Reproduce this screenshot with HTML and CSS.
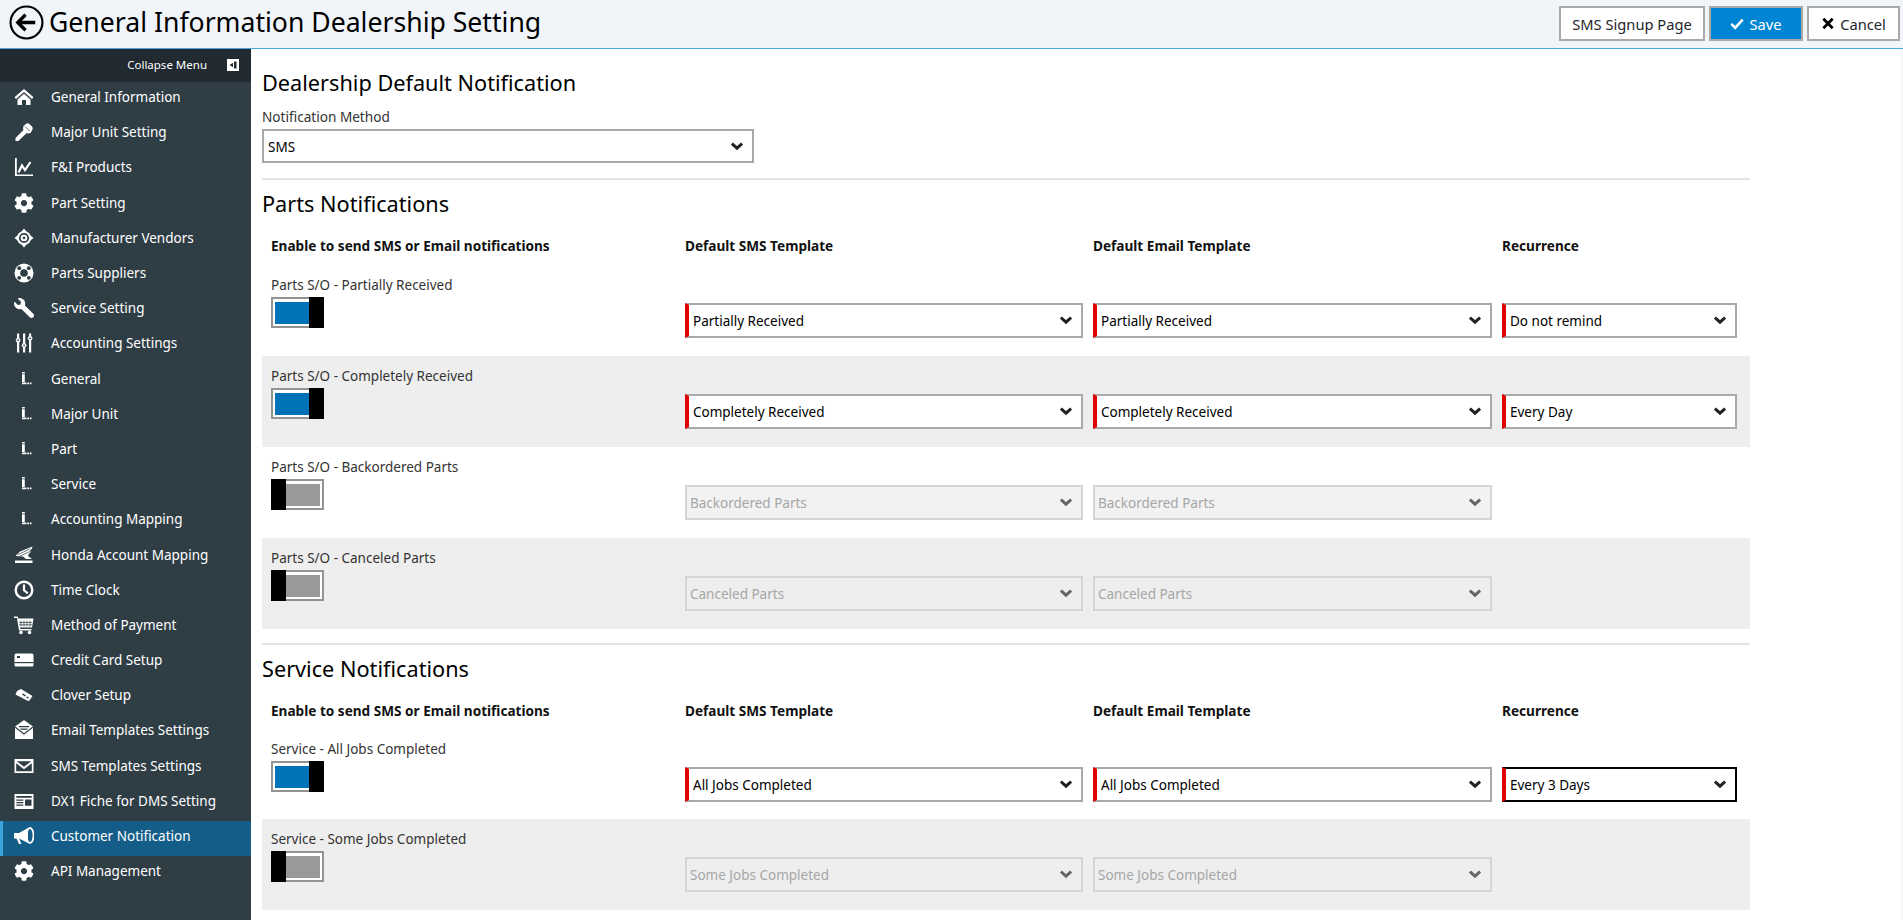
FILE: index.html
```html
<!DOCTYPE html>
<html lang="en">
<head>
<meta charset="utf-8">
<title>General Information Dealership Setting</title>
<link rel="stylesheet" href="styles.css">
</head>
<body>
<svg class="defs" width="0" height="0" aria-hidden="true">
  <symbol id="i-gear" viewBox="0 0 512 512"><path d="M487.4 315.7l-42.6-24.6c4.3-23.2 4.3-47 0-70.2l42.6-24.6c4.9-2.8 7.1-8.6 5.5-14-11.1-35.6-30-67.8-54.7-94.6-3.8-4.1-10-5.1-14.8-2.3L380.8 110c-17.9-15.4-38.5-27.3-60.8-35.1V25.8c0-5.6-3.9-10.5-9.4-11.7-36.7-8.2-74.3-7.8-109.2 0-5.5 1.2-9.4 6.1-9.4 11.7V75c-22.2 7.9-42.8 19.8-60.8 35.1L88.7 85.5c-4.9-2.8-11-1.9-14.8 2.3-24.7 26.7-43.6 58.9-54.7 94.6-1.7 5.4.6 11.2 5.5 14L67.3 221c-4.3 23.2-4.3 47 0 70.2l-42.6 24.6c-4.9 2.8-7.1 8.6-5.5 14 11.1 35.6 30 67.8 54.7 94.6 3.8 4.1 10 5.1 14.8 2.3l42.6-24.6c17.9 15.4 38.5 27.3 60.8 35.1v49.2c0 5.6 3.9 10.5 9.4 11.7 36.7 8.2 74.3 7.8 109.2 0 5.5-1.2 9.4-6.1 9.4-11.7v-49.2c22.2-7.9 42.8-19.8 60.8-35.1l42.6 24.6c4.9 2.8 11 1.9 14.8-2.3 24.7-26.7 43.6-58.9 54.7-94.6 1.5-5.5-.7-11.3-5.6-14.1zM256 336c-44.1 0-80-35.9-80-80s35.9-80 80-80 80 35.9 80 80-35.9 80-80 80z"/></symbol>
  <symbol id="i-sub" viewBox="0 0 20 20"><path d="M8 3h2.800v1.500H8zM8 5.200h2.800v7.800H8zM8 13.500h4.500v1.800H8zM13.300 13.500h1.700v1.800h-1.700zM15.800 13.500h1.700v1.800h-1.700z"/></symbol>
</svg>

<header class="topbar">
  <div class="topbar-left">
    <svg class="back" viewBox="0 0 36 36" aria-hidden="true"><circle cx="18" cy="18" r="16.4" fill="none" stroke="#000" stroke-width="2.2"/><path d="M9 18h18M17 10l-8 8 8 8" fill="none" stroke="#000" stroke-width="3.4"/></svg>
    <h1 class="title">General Information Dealership Setting</h1>
  </div>
  <div class="actions">
    <button class="btn btn-sms" type="button">SMS Signup Page</button>
    <button class="btn btn-save" type="button"><svg class="btn-icon" viewBox="0 0 16 14" aria-hidden="true"><path d="M1.500 7.500l4.500 4.500 8.500-9.500" fill="none" stroke="#fff" stroke-width="3"/></svg>Save</button>
    <button class="btn btn-cancel" type="button"><svg class="btn-icon" viewBox="0 0 14 14" aria-hidden="true"><path d="M2 2l10 10M12 2L2 12" fill="none" stroke="#000" stroke-width="3"/></svg>Cancel</button>
  </div>
</header>

<div class="shell">
  <nav class="sidebar">
    <div class="collapse">
      <span>Collapse Menu</span>
      <svg class="collapse-icon" viewBox="0 0 12 12" aria-hidden="true"><path fill="#fff" d="M0 0h12v12H0z"/><path fill="#212a31" d="M7 2.500h2.500v7H7zM6 3.800v4.400L2.500 6z"/></svg>
    </div>
    <ul class="menu">
      <li class="item"><svg class="ico" viewBox="0 0 20 20"><path d="M10 2L.5 10.300 2 12l8-7 8 7 1.500-1.700zM3.500 12.500L10 6.800l6.500 5.700V18H12v-5H8v5H3.500z"/></svg><span>General Information</span></li>
      <li class="item"><svg class="ico" viewBox="0 0 20 20"><path d="M12.500 1.500a3 3 0 0 1 3 .5l2.500 2.500a3 3 0 0 1 .5 3l-2 3.500-2.500.5-1.300-.6L4.500 19h-3v-3l8-8-.5-1.500.5-2.500z"/><path d="M11 4.500l4.500 4.500" stroke="#2f3d45" stroke-width=".8" fill="none"/></svg><span>Major Unit Setting</span></li>
      <li class="item"><svg class="ico" viewBox="0 0 20 20"><path d="M1 1h1.800v16.500H19V19H1z"/><path d="M4.500 15.500l3.500-7 3 4.500 5.500-8" fill="none" stroke="#fff" stroke-width="2.200"/></svg><span>F&amp;I Products</span></li>
      <li class="item"><svg class="ico" viewBox="0 0 20 20"><use href="#i-gear"/></svg><span>Part Setting</span></li>
      <li class="item"><svg class="ico" viewBox="0 0 20 20"><path d="M10 .5l2.200 2.700a7 7 0 0 1 4.600 4.600L19.500 10l-2.700 2.200a7 7 0 0 1-4.600 4.600L10 19.500l-2.200-2.700a7 7 0 0 1-4.600-4.600L.5 10l2.700-2.200a7 7 0 0 1 4.600-4.600z"/><circle cx="10" cy="10" r="4.200" fill="none" stroke="#2f3d45" stroke-width="1.800"/><circle cx="10" cy="10" r="1.300" fill="#2f3d45"/></svg><span>Manufacturer Vendors</span></li>
      <li class="item"><svg class="ico" viewBox="0 0 20 20"><circle cx="10" cy="10" r="9.500"/><circle cx="10" cy="10" r="3.800" fill="#2f3d45"/><circle cx="5.200" cy="5.200" r="1.900" fill="#2f3d45"/><circle cx="14.800" cy="5.200" r="1.900" fill="#2f3d45"/><circle cx="5.200" cy="14.800" r="1.900" fill="#2f3d45"/><circle cx="14.800" cy="14.800" r="1.900" fill="#2f3d45"/></svg><span>Parts Suppliers</span></li>
      <li class="item"><svg class="ico" viewBox="0 0 512 512"><path transform="matrix(-1 0 0 1 512 0)" d="M507.730 109.100c-2.240-9.030-13.540-12.090-20.120-5.510l-74.360 74.360-67.880-11.310-11.310-67.880 74.360-74.360c6.620-6.620 3.430-17.900-5.660-20.160-47.380-11.740-99.550.91-136.580 37.930-39.640 39.640-50.550 97.100-34.050 147.200L18.740 402.760c-24.990 24.990-24.990 65.510 0 90.500 24.990 24.990 65.510 24.990 90.500 0l213.210-213.210c50.120 16.710 107.470 5.680 147.370-34.220 37.070-37.070 49.700-89.320 37.910-136.730z"/></svg><span>Service Setting</span></li>
      <li class="item"><svg class="ico" viewBox="0 0 20 20"><path d="M3 .5h2.200v5H3zM3 9h2.200v10.500H3zM9 .5h2.200v10H9zM9 14h2.200v5.500H9zM15 .5h2.200v3H15zM15 7h2.200v12.500H15z"/><circle cx="4.100" cy="7.200" r="2.300"/><circle cx="10.100" cy="12.300" r="2.300"/><circle cx="16.100" cy="5.300" r="2.300"/><circle cx="4.100" cy="7.200" r=".9" fill="#2f3d45"/><circle cx="10.100" cy="12.300" r=".9" fill="#2f3d45"/><circle cx="16.100" cy="5.300" r=".9" fill="#2f3d45"/></svg><span>Accounting Settings</span></li>
      <li class="item"><svg class="ico" viewBox="0 0 20 20"><use href="#i-sub"/></svg><span>General</span></li>
      <li class="item"><svg class="ico" viewBox="0 0 20 20"><use href="#i-sub"/></svg><span>Major Unit</span></li>
      <li class="item"><svg class="ico" viewBox="0 0 20 20"><use href="#i-sub"/></svg><span>Part</span></li>
      <li class="item"><svg class="ico" viewBox="0 0 20 20"><use href="#i-sub"/></svg><span>Service</span></li>
      <li class="item"><svg class="ico" viewBox="0 0 20 20"><use href="#i-sub"/></svg><span>Accounting Mapping</span></li>
      <li class="item"><svg class="ico" viewBox="0 0 20 20"><path d="M18.500 1.500L6 6.500 1.500 11l7.500.5 3 2.500h6L14 11l1-2.500 2.500-2-2.500.5 3-3.500z"/><path d="M4 9.500L16 4M6 11l9-4" stroke="#2f3d45" stroke-width=".7" fill="none"/><path d="M1 15.500h17.500v2.500H1z"/></svg><span>Honda Account Mapping</span></li>
      <li class="item"><svg class="ico" viewBox="0 0 20 20"><circle cx="10" cy="10" r="8.300" fill="none" stroke="#fff" stroke-width="2.400"/><path d="M10 4.500v5.800l3.800 3" fill="none" stroke="#fff" stroke-width="2.200"/></svg><span>Time Clock</span></li>
      <li class="item"><svg class="ico" viewBox="0 0 20 20"><path d="M0 1.500h3.500l1 2h15l-1.500 9H6l.4 1.500h11.100v1.500H5L3 3H0z"/><circle cx="7" cy="17.500" r="1.800"/><circle cx="15.500" cy="17.500" r="1.800"/><path d="M7 5.500v6M10 5.500v6M13 5.500v6M16 5.500v6M5 7.500h13M5 9.800h13" stroke="#2f3d45" stroke-width=".7"/></svg><span>Method of Payment</span></li>
      <li class="item"><svg class="ico" viewBox="0 0 20 20"><path d="M2 3.500h16A1.500 1.500 0 0 1 19.500 5v10a1.500 1.500 0 0 1-1.500 1.500H2A1.500 1.500 0 0 1 .5 15V5A1.500 1.500 0 0 1 2 3.500z"/><path d="M.5 12h19v1.200H.5z" fill="#2f3d45"/><path d="M3 6h3v2H3z" fill="#2f3d45"/></svg><span>Credit Card Setup</span></li>
      <li class="item"><svg class="ico" viewBox="0 0 20 20"><path d="M7 4l11.500 7-3 4.500-1.500.5L1.500 9.500 3 6z"/><path d="M9 8.500l3 2-1 1-3-2zM13 11.500l2 1-1 1-2-1z" fill="#2f3d45"/></svg><span>Clover Setup</span></li>
      <li class="item"><svg class="ico" viewBox="0 0 20 20"><path d="M10 0l9 6.500V19H1V6.500z"/><path d="M1 7l9 7 9-7" fill="none" stroke="#2f3d45" stroke-width="1.200"/><path d="M5 6h10v1.300H5zM6.500 8.500h7v1.200h-7z" fill="#2f3d45"/></svg><span>Email Templates Settings</span></li>
      <li class="item"><svg class="ico" viewBox="0 0 20 20"><path d="M.5 3h19v14H.5zM2.800 5.300L10 10.800l7.200-5.500zM2.200 7.300v7.900h15.600V7.300L10 13.200z" fill-rule="evenodd"/></svg><span>SMS Templates Settings</span></li>
      <li class="item"><svg class="ico" viewBox="0 0 20 20"><path d="M.5 3h19v15H.5z"/><path d="M2.300 5h15.400v1.800H2.300zM2.300 8.500h7v1.300h-7zM2.300 11h7v1.300h-7zM2.300 13.500h7v1.300h-7zM11 8.500h6.500v6.300H11z" fill="#2f3d45"/></svg><span>DX1 Fiche for DMS Setting</span></li>
      <li class="item item-active"><svg class="ico" viewBox="0 0 20 20"><path d="M0 7h5l9-5v15L5 12.500 7.500 18H5L2.500 12.500H0z"/><ellipse cx="16" cy="9.500" rx="3.500" ry="7.500" fill="none" stroke="#fff" stroke-width="1.800"/></svg><span>Customer Notification</span></li>
      <li class="item"><svg class="ico" viewBox="0 0 20 20"><use href="#i-gear"/></svg><span>API Management</span></li>
    </ul>
  </nav>

  <main class="content">
    <h2 class="section-title first">Dealership Default Notification</h2>
    <label class="field-label" for="method">Notification Method</label>
    <select class="sel sel-method" id="method"><option>SMS</option></select>
    <hr class="rule">

    <h2 class="section-title">Parts Notifications</h2>
    <div class="grid head">
      <div>Enable to send SMS or Email notifications</div><div>Default SMS Template</div><div>Default Email Template</div><div>Recurrence</div>
    </div>
    <div class="grid row">
      <div class="name"><div class="name-text">Parts S/O - Partially Received</div><div class="toggle on"><span class="fill"></span><span class="thumb"></span></div></div>
      <select class="sel req"><option>Partially Received</option></select>
      <select class="sel req"><option>Partially Received</option></select>
      <select class="sel req"><option>Do not remind</option></select>
    </div>
    <div class="grid row alt">
      <div class="name"><div class="name-text">Parts S/O - Completely Received</div><div class="toggle on"><span class="fill"></span><span class="thumb"></span></div></div>
      <select class="sel req"><option>Completely Received</option></select>
      <select class="sel req"><option>Completely Received</option></select>
      <select class="sel req"><option>Every Day</option></select>
    </div>
    <div class="grid row">
      <div class="name"><div class="name-text">Parts S/O - Backordered Parts</div><div class="toggle off"><span class="thumb"></span><span class="fill"></span></div></div>
      <select class="sel" disabled><option>Backordered Parts</option></select>
      <select class="sel" disabled><option>Backordered Parts</option></select>
    </div>
    <div class="grid row alt">
      <div class="name"><div class="name-text">Parts S/O - Canceled Parts</div><div class="toggle off"><span class="thumb"></span><span class="fill"></span></div></div>
      <select class="sel" disabled><option>Canceled Parts</option></select>
      <select class="sel" disabled><option>Canceled Parts</option></select>
    </div>
    <hr class="rule rule-tight">

    <h2 class="section-title">Service Notifications</h2>
    <div class="grid head head-tight">
      <div>Enable to send SMS or Email notifications</div><div>Default SMS Template</div><div>Default Email Template</div><div>Recurrence</div>
    </div>
    <div class="grid row">
      <div class="name"><div class="name-text">Service - All Jobs Completed</div><div class="toggle on"><span class="fill"></span><span class="thumb"></span></div></div>
      <select class="sel req"><option>All Jobs Completed</option></select>
      <select class="sel req"><option>All Jobs Completed</option></select>
      <select class="sel req focus"><option>Every 3 Days</option></select>
    </div>
    <div class="grid row alt">
      <div class="name"><div class="name-text">Service - Some Jobs Completed</div><div class="toggle off"><span class="thumb"></span><span class="fill"></span></div></div>
      <select class="sel" disabled><option>Some Jobs Completed</option></select>
      <select class="sel" disabled><option>Some Jobs Completed</option></select>
    </div>
  </main>
</div>
</body>
</html>
```

FILE: styles.css
```css
* { box-sizing: border-box; }
html { overflow: hidden; height: 920px; }
body {
  margin: 0;
  display: flex;
  flex-direction: column;
  height: 920px;
  overflow: hidden;
  background: #fff;
  color: #1f262c;
  font-family: "Noto Sans", "Open Sans", sans-serif;
  font-size: 13.5px;
}
.defs { position: absolute; top: 0; left: 0; }

.topbar {
  flex: none;
  height: 49px;
  display: flex;
  align-items: flex-start;
  justify-content: space-between;
  background: #f1f5f9;
  border-bottom: 1px solid #4aa5e0;
}
.topbar-left { display: flex; align-items: center; height: 44px; padding-left: 9px; }
.back { width: 35px; height: 35px; margin-right: 5px; flex: none; }
.title { margin: 0; font-size: 26.6px; font-weight: 400; color: #000; white-space: nowrap; }
.actions { display: flex; gap: 4px; padding: 6px 3px 0 0; }
.btn {
  height: 35px;
  border: 2px solid #a9a9a9;
  background: #fff;
  color: #1f262c;
  font: inherit;
  font-size: 14.7px;
  display: flex;
  align-items: center;
  justify-content: center;
  padding: 0;
}
.btn-sms { width: 146px; }
.btn-save { width: 94px; background: #0085d4; color: #fff; }
.btn-cancel { width: 93px; }
.btn-icon { width: 14px; height: 13px; margin-right: 5px; }

.shell { flex: 1; display: flex; min-height: 0; overflow: hidden; }
.sidebar { flex: none; width: 251px; background: #2f3d45; color: #fff; }
.collapse {
  height: 33px;
  background: #212a31;
  display: flex;
  align-items: center;
  justify-content: flex-end;
  gap: 20px;
  padding: 0 12px 2px 0;
  font-size: 11.5px;
}
.collapse-icon { width: 12px; height: 12px; }
.menu { list-style: none; margin: 0; padding: 0; }
.item {
  height: 35.2px;
  display: flex;
  align-items: center;
  padding: 0 0 5px 14px;
  font-size: 13.5px;
  white-space: nowrap;
}
.ico { width: 20px; height: 20px; flex: none; margin-right: 17px; fill: #fff; }
.item-active { background: #145d88; box-shadow: inset 3px 0 0 #3aa3dc; }

.content {
  flex: 1;
  min-width: 0;
  overflow: hidden;
  padding: 20px 151px 0 11px;
  border-right: 2px solid #f6f6f6;
}
.section-title { margin: 10px 0 0; font-size: 21.7px; line-height: 28px; font-weight: 400; color: #000; }
.section-title.first { margin-top: 0; }
.field-label { display: block; margin: 11px 0 3px; line-height: 18px; color: #333; font-size: 13.6px; }
.sel {
  display: block;
  appearance: none;
  width: 100%;
  height: 35px;
  border: 2px solid #a9a9a9;
  border-radius: 0;
  padding: 1px 24px 0 4px;
  background: #fff url("data:image/svg+xml,%3Csvg xmlns='http://www.w3.org/2000/svg' viewBox='0 0 12 9'%3E%3Cpath d='M.9 1.600L6 6.200l5.100-4.600' fill='none' stroke='%23222' stroke-width='3'/%3E%3C/svg%3E") no-repeat right 9px center / 12px 9px;
  color: #000;
  font: inherit;
  font-size: 13.5px;
}
.sel-method { width: 492px; height: 34px; }
.req { border-left: 4px solid #e00000; }
.focus { border-color: #000; border-left-color: #e00000; }
.sel:disabled {
  border-color: #d5d5d5;
  background-color: #f2f2f2;
  color: #a6a6a6;
  opacity: 1;
  padding-left: 3px;
  background-image: url("data:image/svg+xml,%3Csvg xmlns='http://www.w3.org/2000/svg' viewBox='0 0 12 9'%3E%3Cpath d='M.9 1.600L6 6.200l5.100-4.600' fill='none' stroke='%23666' stroke-width='3'/%3E%3C/svg%3E");
}
.alt .sel:disabled { background-color: #eee; }
.rule { margin: 15px 0 0; border: 0; border-top: 2px solid #e3e3e3; height: 0; }
.rule-tight { margin-top: 14px; }

.grid {
  display: grid;
  grid-template-columns: 404px 398px 399px 235px;
  column-gap: 10px;
  padding: 0 13px 0 9px;
}
.head { margin: 18px 0 9px; line-height: 20px; font-weight: 700; color: #111; font-size: 13.6px; }
.head-tight { margin-bottom: 8px; }
.row { height: 90.9px; align-items: start; }
.row .sel { margin-top: 38px; }
.alt { background: #eee; }
.name-text { margin-top: 10px; line-height: 20px; color: #333; }
.toggle {
  display: flex;
  width: 53px;
  height: 31px;
  margin-top: 2px;
  border: 2px solid #939393;
  background: #fff;
}
.fill { flex: 1; margin: 3px 0 2px; }
.on { padding-left: 2px; }
.off { padding-right: 2px; }
.on .fill { background: #0072b8; }
.off .fill { background: #999; }
.thumb { flex: none; width: 15px; margin: -2px 0; background: #000; }
.on .thumb { margin-right: -2px; }
.off .thumb { margin-left: -2px; }
```
